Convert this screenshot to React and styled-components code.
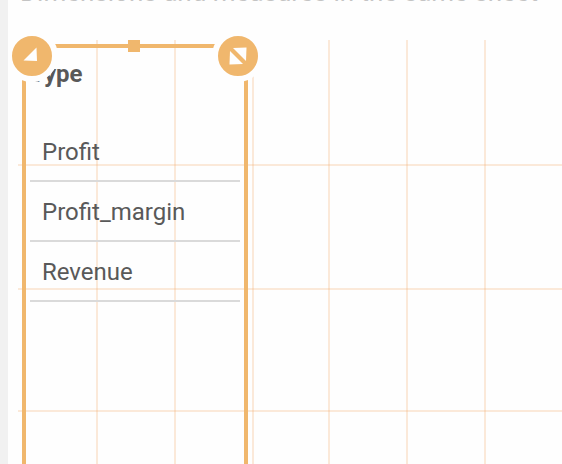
import { Fragment } from 'react';
import styled, { createGlobalStyle } from 'styled-components';

const accent = '#f0b76d';
const line = 'rgba(244, 173, 108, 0.25)';

const rows = ['Profit', 'Profit_margin', 'Revenue'];
const columnLines = ['c1', 'c2', 'c3', 'c4', 'c5', 'c6'];
const rowLines = ['r1', 'r2', 'r3'];

const GlobalStyle = createGlobalStyle`
  * {
    box-sizing: border-box;
  }
  body {
    margin: 0;
    background: #fefefe;
    color: #595959;
    font-family: Roboto, 'Noto Sans', sans-serif;
  }
`;

const Page = styled.div`
  display: flex;
  flex-direction: column;
  min-height: 100vh;
  overflow: hidden;
  border-left: 8px solid #f1f1f1;
`;

const Header = styled.header`
  height: 40px;
  padding-left: 12px;
  overflow: hidden;
`;

const SheetTitle = styled.h1`
  margin: -25px 0 0;
  font-size: 26px;
  line-height: 34px;
  font-weight: 400;
  color: #c4c4c4;
  white-space: nowrap;
`;

const Sheet = styled.main`
  position: relative;
  display: flex;
  flex: 1;
  align-items: stretch;
  padding: 4px 0 0 14px;
`;

const Columns = styled.div`
  position: absolute;
  inset: 0 0 0 12px;
  display: grid;
  grid-template-columns: repeat(3, 78px) 76px repeat(2, 78px);

  span {
    border-right: 2px solid ${line};
  }
`;

const Rows = styled.div`
  position: absolute;
  inset: 0 0 0 10px;
  display: grid;
  grid-template-rows: 126px 124px 122px;

  span {
    border-bottom: 2px solid ${line};
  }
`;

const Frame = styled.section`
  position: relative;
  width: 226px;
  border: 4px solid ${accent};
  border-bottom: 0;
`;

const Knob = styled.button`
  position: absolute;
  top: -18px;
  ${({ $side }) => $side}: -20px;
  width: 52px;
  height: 52px;
  padding: 0;
  border: 6px solid #fefefe;
  border-radius: 50%;
  background: ${accent};

  svg {
    display: block;
  }
`;

const Handle = styled.button`
  position: absolute;
  top: -8px;
  left: 50%;
  width: 12px;
  height: 12px;
  margin-left: -7px;
  padding: 0;
  border: 0;
  background: ${accent};
`;

const Table = styled.table`
  width: 100%;
  border-collapse: collapse;
  text-align: left;
`;

const Heading = styled.th`
  height: 74px;
  padding: 8px 4px 0;
  vertical-align: top;
  font-size: 24px;
  line-height: 36px;
  font-weight: 700;
`;

const Cell = styled.td`
  height: 60px;
  padding: 0 4px;
  font-size: 24px;
  line-height: 56px;

  div {
    padding: 2px 0 0 12px;
    border-bottom: 2px solid #dadada;
  }
`;

const GridLines = () => (
  <Fragment>
    <Columns aria-hidden="true">
      {columnLines.map(id => (
        <span key={id} />
      ))}
    </Columns>
    <Rows aria-hidden="true">
      {rowLines.map(id => (
        <span key={id} />
      ))}
    </Rows>
  </Fragment>
);

const TypeTable = () => (
  <Table>
    <thead>
      <tr>
        <Heading scope="col">Type</Heading>
      </tr>
    </thead>
    <tbody>
      {rows.map(name => (
        <tr key={name}>
          <Cell>
            <div>{name}</div>
          </Cell>
        </tr>
      ))}
    </tbody>
  </Table>
);

const App = () => (
  <Page>
    <GlobalStyle />
    <Header>
      <SheetTitle>Dimensions and measures in the same sheet</SheetTitle>
    </Header>
    <Sheet>
      <GridLines />
      <Frame>
        <TypeTable />
        <Handle type="button" aria-label="Resize height" />
        <Knob type="button" $side="left" aria-label="Resize from left corner">
          <svg width="40" height="40" viewBox="0 0 40 40">
            <path d="M24.5 11.5L25 25L11.5 24.5Z" fill="#fefefe" />
          </svg>
        </Knob>
        <Knob type="button" $side="right" aria-label="Resize from right corner">
          <svg width="40" height="40" viewBox="0 0 40 40">
            <path d="M15 12L28.5 11.5L28 25Z" fill="#fefefe" />
            <path d="M12 15L25 28L11.5 28.5Z" fill="#fefefe" />
          </svg>
        </Knob>
      </Frame>
    </Sheet>
  </Page>
);

export default App;
